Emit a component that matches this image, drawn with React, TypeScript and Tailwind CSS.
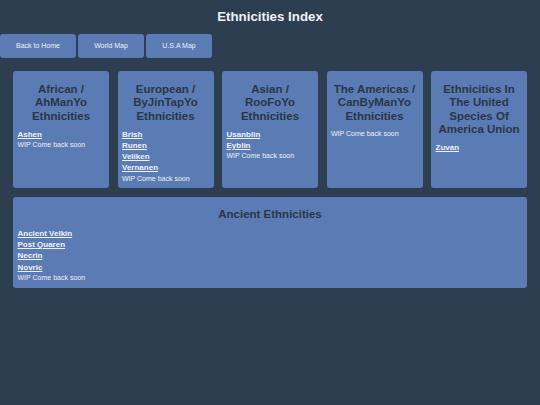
import React from "react";

type Region = { title: string; links: string[] };

const regions: Region[] = [
  { title: "African / AhManYo Ethnicities", links: ["Ashen"] },
  { title: "European / ByJinTapYo Ethnicities", links: ["Brish", "Runen", "Veliken", "Vernanen"] },
  { title: "Asian / RooFoYo Ethnicities", links: ["Usanblin", "Eyblin"] },
  { title: "The Americas / CanByManYo Ethnicities", links: [] },
  { title: "Ethnicities In The United Species Of America Union", links: ["Zuvan"], },
];

const wip: Record<number, boolean> = { 0: true, 1: true, 2: true, 3: true, 4: false };

function LinkList({ links, showWip }: { links: string[]; showWip: boolean }) {
  return (
    <div className="flex flex-col items-start">
      {links.map((l) => (
        <a
          key={l}
          href="#"
          className="text-[8px] leading-[11.3px] font-bold underline text-[#eef2f7]"
        >
          {l}
        </a>
      ))}
      {showWip && (
        <p className="text-[7px] leading-[9.3px] text-[#eef2f7]">WIP Come back soon</p>
      )}
    </div>
  );
}

export default function App() {
  return (
    <div
      className="w-full min-h-[405px] bg-[#2c3e50]"
      style={{ fontFamily: '"Liberation Sans", Arial, sans-serif' }}
    >
      <h1 className="pt-[8px] text-center text-[13.3px] leading-[17px] font-bold text-[#eef2f7]">
        Ethnicities Index
      </h1>
      <nav className="mt-[9px] flex gap-[2px]">
        <a href="#" className="flex h-[24px] w-[76px] items-center justify-center rounded-[3px] bg-[#5b7bb4] text-[7px] text-[#eef2f7]">
          Back to Home
        </a>
        <a href="#" className="flex h-[24px] w-[66px] items-center justify-center rounded-[3px] bg-[#5b7bb4] text-[7px] text-[#eef2f7]">
          World Map
        </a>
        <a href="#" className="flex h-[24px] w-[66px] items-center justify-center rounded-[3px] bg-[#5b7bb4] text-[7px] text-[#eef2f7]">
          U.S.A Map
        </a>
      </nav>
      <div className="mx-[13px] mt-[13px] grid grid-cols-5 gap-[8.5px]">
        {regions.map((r, i) => (
          <div key={r.title} className="h-[117px] rounded-[3px] bg-[#5b7bb4] px-[4.5px] pt-[11.5px]">
            <h3 className="text-center text-[11.5px] leading-[13.5px] font-bold text-[#2a3647]">
              {r.title}
            </h3>
            <div className="mt-[5.5px]">
              <LinkList links={r.links} showWip={wip[i]} />
            </div>
          </div>
        ))}
      </div>
      <div className="mx-[13px] mt-[9px] h-[91px] rounded-[3px] bg-[#5b7bb4] px-[4.5px] pt-[11.2px]">
        <h3 className="text-center text-[11.5px] leading-[13.5px] font-bold text-[#2a3647]">
          Ancient Ethnicities
        </h3>
        <div className="mt-[6px]">
          <LinkList links={["Ancient Velkin", "Post Quaren", "Necrin", "Novric"]} showWip={true} />
        </div>
      </div>
    </div>
  );
}
